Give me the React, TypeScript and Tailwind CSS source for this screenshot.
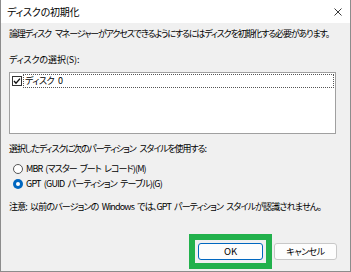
import React from "react";

const font = "font-['Noto_Sans_CJK_JP','Noto_Sans',sans-serif] [font-feature-settings:'palt']";

const Radio = ({ checked, label, tracking }: { checked?: boolean; label: string; tracking: string }) => (
  <div className="flex items-center h-[15px] pl-[4px] gap-[3px]">
    <svg width="10" height="10" viewBox="0 0 10 10" className="shrink-0">
      {checked ? (
        <>
          <circle cx="5" cy="5" r="5" fill="#0067c0" />
          <circle cx="5" cy="5" r="2" fill="#fff" />
        </>
      ) : (
        <circle cx="5" cy="5" r="4.5" fill="#fff" stroke="#555" strokeWidth="1" />
      )}
    </svg>
    <span className={`text-[9px] leading-[15px] whitespace-nowrap [word-spacing:2px] ${tracking}`}>{label}</span>
  </div>
);

export default function App() {
  return (
    <div className={`w-[351px] h-[272px] bg-[#f0f0f0] border-x border-b border-[#8c8c8c] flex flex-col text-black ${font}`}>
      {/* title bar */}
      <div className="h-[23px] bg-white flex items-center justify-between pl-[6px] pr-[8px]">
        <span className="text-[10px] leading-[15px] tracking-[-0.2px]">ディスクの初期化</span>
        <svg width="8" height="8" viewBox="0 0 8 8">
          <path d="M0.5 0.5 L7.5 7.5 M7.5 0.5 L0.5 7.5" stroke="#222" strokeWidth="0.9" />
        </svg>
      </div>

      <div className="px-[8px] flex flex-col">
        <p className="mt-[3px] text-[9px] leading-[16px] tracking-[-1.15px] [word-spacing:3px] whitespace-nowrap">
          論理ディスク マネージャーがアクセスできるようにするにはディスクを初期化する必要があります。
        </p>
        <p className="mt-[10px] text-[9px] leading-[16px] tracking-[-0.1px]">ディスクの選択(S):</p>

        <div className="mt-[4px] w-[327px] h-[62px] bg-white border border-[#a0a0a0] p-[1px]">
          <div className="flex items-center h-[14px]">
            <svg width="10" height="10" viewBox="0 0 10 10" className="ml-[1px] shrink-0">
              <rect x="0.5" y="0.5" width="9" height="9" fill="#fff" stroke="#333" />
              <path d="M2 5 L4 7.2 L8 2.6" fill="none" stroke="#111" strokeWidth="1.4" />
            </svg>
            <div className="ml-[1px] flex-1 h-[14px] border border-dotted border-[#555] flex items-center pl-[1px]">
              <span className="text-[9px] leading-[12px] tracking-[-0.4px] [word-spacing:2px]">ディスク 0</span>
            </div>
          </div>
        </div>

        <p className="mt-[7px] text-[9px] leading-[16px] tracking-[-1.1px] [word-spacing:3px] whitespace-nowrap">
          選択したディスクに次のパーティション スタイルを使用する:
        </p>
        <div className="mt-[4px]">
          <Radio tracking="tracking-[-0.9px]" label="MBR (マスター ブート レコード)(M)" />
          <Radio checked tracking="tracking-[-0.8px]" label="GPT (GUID パーティション テーブル)(G)" />
        </div>

        <p className="mt-[8px] text-[9px] leading-[16px] tracking-[-0.85px] [word-spacing:2px] whitespace-nowrap">
          注意: 以前のバージョンの Windows では、GPT パーティション スタイルが認識されません。
        </p>

        <div className="mt-[19px] flex justify-end items-center pr-[5px]">
          <div className="border-[6px] border-[#22b14c] p-[3px] bg-[#f0f0f0]">
            <button className="w-[65px] h-[17px] rounded-[3px] bg-[#fdfdfd] border border-[#0067c0] text-[9.5px] leading-[15px] flex items-center justify-center">
              OK
            </button>
          </div>
          <button className="ml-[2px] w-[63px] h-[17px] rounded-[3px] bg-[#fdfdfd] border border-[#c8c8c8] text-[9px] tracking-[-0.5px] leading-[15px] flex items-center justify-center">
            キャンセル
          </button>
        </div>
      </div>
    </div>
  );
}
